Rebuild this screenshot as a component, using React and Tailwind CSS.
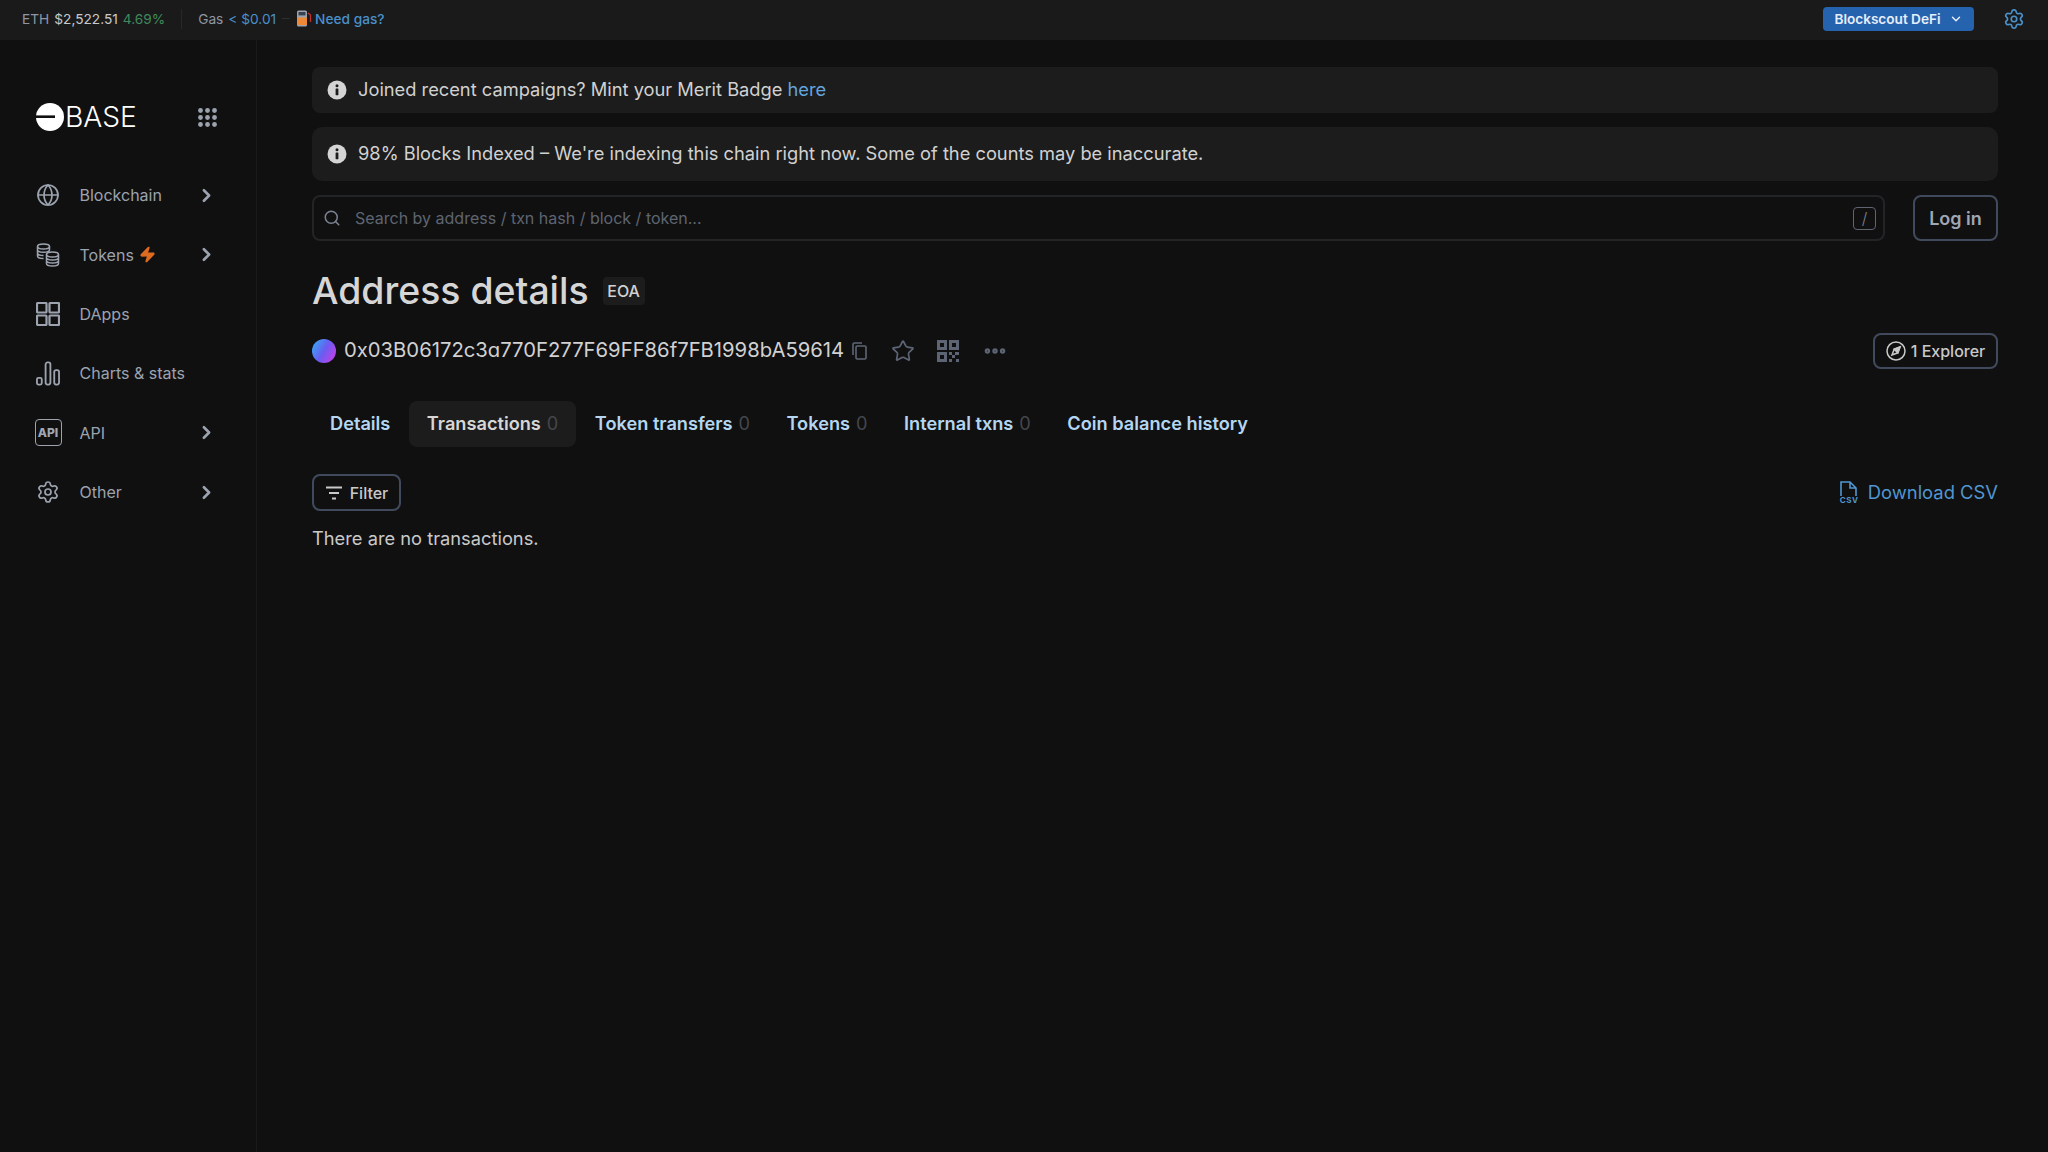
import React from 'react';
import { Globe, ChevronRight, ChevronDown, Settings, Search, Star, Ellipsis, Zap } from 'lucide-react';

const Coins = () => (
  <svg width="24" height="24" viewBox="0 0 24 24" fill="none" stroke="currentColor" strokeWidth="1.5">
    <ellipse cx="7.5" cy="3.5" rx="6" ry="2.5" />
    <path d="M1.5 3.5v9.5c0 1.4 2.7 2.5 6 2.5M1.5 6.8c0 1.4 2.7 2.5 6 2.5s6-1.1 6-2.5V3.5M1.5 10c0 1.4 2.7 2.5 6 2.5" />
    <ellipse cx="16.5" cy="11.5" rx="6" ry="2.5" />
    <path d="M10.5 11.5v9c0 1.4 2.7 2.5 6 2.5s6-1.1 6-2.5v-9M10.5 14.5c0 1.4 2.7 2.5 6 2.5s6-1.1 6-2.5M10.5 17.5c0 1.4 2.7 2.5 6 2.5s6-1.1 6-2.5" />
  </svg>
);
const Apps = () => (
  <svg width="24" height="24" viewBox="0 0 24 24" fill="none" stroke="currentColor" strokeWidth="2.2">
    <rect x="1" y="1" width="9.5" height="9.5" rx="0.8" /><rect x="13.5" y="1" width="9.5" height="9.5" rx="0.8" />
    <rect x="1" y="13.5" width="9.5" height="9.5" rx="0.8" /><rect x="13.5" y="13.5" width="9.5" height="9.5" rx="0.8" />
  </svg>
);
const Bars = () => (
  <svg width="25" height="25" viewBox="0 0 25 25" fill="none" stroke="currentColor" strokeWidth="1.9">
    <rect x="1" y="17" width="5" height="7" rx="1.6" /><rect x="10" y="1" width="5" height="23" rx="2" /><rect x="19" y="9" width="5" height="15" rx="2" />
  </svg>
);
const Info = () => (
  <svg width="20" height="20" viewBox="0 0 20 20" className="shrink-0">
    <circle cx="10" cy="10" r="9.5" fill="#d4d4d4" />
    <circle cx="10" cy="5.8" r="1.5" fill="#1c1c1c" />
    <rect x="8.6" y="8.6" width="2.8" height="6.6" rx="0.4" fill="#1c1c1c" />
  </svg>
);
const Pump = () => (
  <svg width="16" height="17" viewBox="0 0 16 17" className="shrink-0">
    <rect x="1" y="0.5" width="10" height="16" rx="1.5" fill="#9ca3af" />
    <rect x="2.5" y="2" width="7" height="3.4" fill="#374151" />
    <rect x="1" y="7.5" width="10" height="7.5" fill="#ed8936" />
    <path d="M12 3l2.5 2v7" stroke="#c53030" strokeWidth="1.3" fill="none" />
  </svg>
);
const Qr = () => (
  <svg width="22" height="22" viewBox="0 0 22 22" fill="#5d6575">
    <path fillRule="evenodd" d="M0 0h10v10H0zM3 3v4h4V3z" />
    <path fillRule="evenodd" d="M12 0h10v10H12zM15 3v4h4V3z" />
    <path fillRule="evenodd" d="M0 12h10v10H0zM3 15v4h4v-4z" />
    <path d="M12 12h3v3h-3zM18 12h4v3h-4zM15 15h3v3h-3zM12 19h3v3h-3zM19 19h3v3h-3z" />
  </svg>
);
const CopyIcon = () => (
  <svg width="15" height="18" viewBox="0 0 15 18" fill="none" stroke="#5d6575" strokeWidth="1.6">
    <rect x="4" y="4" width="10" height="13" rx="1.2" />
    <path d="M1 13V2.2C1 1.5 1.5 1 2.2 1H10" />
  </svg>
);
const CompassIcon = () => (
  <svg width="20" height="20" viewBox="0 0 20 20" fill="none" stroke="currentColor" strokeWidth="1.5" className="shrink-0">
    <circle cx="10" cy="10" r="9" />
    <path d="M14 6l-2.2 5.8L6 14l2.2-5.8z" />
    <path d="M14 6L8.2 8.2l3.6 3.6z" fill="currentColor" />
  </svg>
);

const nav = [
  { label: 'Blockchain', icon: <Globe size={24} strokeWidth={1.7} />, more: true },
  { label: 'Tokens', icon: <Coins />, more: true, bolt: true },
  { label: 'DApps', icon: <Apps /> },
  { label: 'Charts & stats', icon: <Bars /> },
  {
    label: 'API',
    icon: (
      <span className="flex h-[27px] w-[27px] shrink-0 items-center justify-center rounded-[4px] border-[1.5px] border-[#9ca3af] text-[12px] font-extrabold leading-none text-[#a0a7b4]">API</span>
    ),
    more: true,
  },
  { label: 'Other', icon: <Settings size={26} strokeWidth={1.7} />, more: true },
];

const tabs = [
  ['Details', null],
  ['Transactions', '0', true],
  ['Token transfers', '0'],
  ['Tokens', '0'],
  ['Internal txns', '0'],
  ['Coin balance history', null],
];

export default function App() {
  return (
    <div className="flex min-h-screen flex-col bg-[#101011] font-[Inter,sans-serif] text-[#d6d6d6]">
      <header className="flex h-10 items-center justify-between bg-[#1a1a1b] pb-[2px] pl-[22px] pr-[23px] text-[13.7px]">
        <div className="flex items-center">
          <span className="text-[#8f96a3]">ETH</span>
          <span className="ml-[5px] text-[#c9c9c9]">$2,522.51</span>
          <span className="ml-[5px] text-[#3f8a5c]">4.69%</span>
          <span className="ml-4 mr-4 h-5 w-px bg-[#26282a]" />
          <span className="text-[#8f96a3]">Gas</span>
          <span className="ml-[5px] text-[#4a90c9]">&lt; $0.01</span>
          <span className="mx-[6px] h-px w-2 bg-[#2c2e30]" />
          <Pump />
          <span className="ml-[3px] font-medium text-[#4a90c9]">Need gas?</span>
        </div>
        <div className="flex items-center gap-[29px]">
          <button className="flex h-[24px] w-[151px] items-center justify-center gap-2 rounded-[4px] bg-[#2563ae] text-[13.6px] font-semibold text-[#e6eefa]">
            Blockscout DeFi
            <ChevronDown size={14} strokeWidth={2.5} />
          </button>
          <Settings size={22} strokeWidth={1.8} className="text-[#4a90c9]" />
        </div>
      </header>

      <div className="flex flex-1">
        <aside className="w-[257px] shrink-0 border-r border-[#1a1a1b] pl-[36px] pr-[39px] pt-[63px]">
          <div className="flex h-[28px] items-center justify-between">
            <div className="flex items-center gap-[1px]">
              <svg width="28" height="28" viewBox="0 0 28 28">
                <circle cx="14" cy="14" r="14" fill="#fff" />
                <rect x="0" y="12.4" width="19" height="2.6" fill="#101011" />
              </svg>
              <span className="text-[28.2px] font-light leading-none text-white">BASE</span>
            </div>
            <svg width="19" height="19" viewBox="0 0 19 19" fill="#9ca3af">
              {[2.5, 9.5, 16.5].flatMap((y) => [2.5, 9.5, 16.5].map((x) => <circle key={`${x}-${y}`} cx={x} cy={y} r="2.4" />))}
            </svg>
          </div>
          <nav className="mt-[34.5px]">
            {nav.map((n) => (
              <div key={n.label} className="flex h-[59.4px] items-center text-[#9ca3af]">
                <span className="flex w-[24px] shrink-0 items-center justify-center">{n.icon}</span>
                <span className="ml-[19.5px] text-[16px]">{n.label}</span>
                {n.bolt && <Zap size={17} fill="#dd6b20" stroke="#dd6b20" className="ml-[5px]" />}
                {n.more && <ChevronRight size={21} strokeWidth={3} className="ml-auto" />}
              </div>
            ))}
          </nav>
        </aside>

        <main className="flex-1 pl-[55px] pr-[50px] pt-[27px]">
          <div className="flex h-[46px] items-center gap-[11px] rounded-[8px] bg-[#1c1c1c] px-[15px] text-[18.28px] text-[#d1d1d1]">
            <Info />
            <span>Joined recent campaigns? Mint your Merit Badge <span className="text-[#63a4de]">here</span></span>
          </div>
          <div className="mt-[14px] flex h-[54px] items-center gap-[11px] rounded-[10px] bg-[#1c1c1c] px-[15px] text-[18.28px] text-[#d1d1d1]">
            <Info />
            <span>98% Blocks Indexed – We're indexing this chain right now. Some of the counts may be inaccurate.</span>
          </div>

          <div className="mt-[14px] flex items-center justify-between">
            <div className="flex h-[46px] w-[1573px] items-center rounded-[8px] border-2 border-[#222426] pl-[9px] pr-[7px]">
              <Search size={18} className="text-[#7b8290]" />
              <span className="ml-[14px] flex-1 text-[16px] text-[#5e6570]">Search by address / txn hash / block / token...</span>
              <span className="flex h-[23px] w-[23px] items-center justify-center rounded-[4px] border-[1.5px] border-[#5e6570] text-[16px] font-light text-[#7b8290]">/</span>
            </div>
            <button className="h-[46px] w-[85px] rounded-[8px] border-[2.5px] border-[#414a5c] text-[18px] font-semibold text-[#a0a7b4]">Log in</button>
          </div>

          <div className="mt-[30px] flex h-[40px] items-center">
            <h1 className="text-[37.4px] font-medium leading-none text-[#d6d6d6]">Address details</h1>
            <span className="ml-[14px] flex h-[28px] w-[42px] items-center justify-center rounded-[4px] bg-[#1c1c1c] text-[16px] font-medium text-[#d1d1d1]">EOA</span>
          </div>

          <div className="mt-[21.5px] flex h-[36px] items-center">
            <span className="h-6 w-6 shrink-0 rounded-full bg-[linear-gradient(120deg,#2fb4f5,#6a5cf0_50%,#d63be8)]" />
            <span className="ml-[8px] text-[20.26px] text-[#d1d1d1] [font-feature-settings:'cv11']">0x03B06172c3a770F277F69FF86f7FB1998bA59614</span>
            <span className="ml-[8px]"><CopyIcon /></span>
            <Star size={24} strokeWidth={1.7} className="ml-[24px] text-[#5d6575]" />
            <span className="ml-[22px]"><Qr /></span>
            <Ellipsis size={26} strokeWidth={3} className="ml-[23px] text-[#5d6575]" />
            <button className="ml-auto flex h-[36px] w-[125px] items-center justify-center gap-[5px] rounded-[8px] border-[2.5px] border-[#414a5c] text-[16px] font-medium text-[#c9c9c9]">
              <CompassIcon />
              1 Explorer
            </button>
          </div>

          <div className="mt-[32.5px] flex h-[46px] items-center gap-[0.5px]">
            {tabs.map(([t, c, active]) => (
              <div key={t} className={`flex h-[46px] items-center rounded-[8px] px-[18px] text-[18.2px] font-semibold ${active ? 'bg-[#1c1c1c] text-[#d6d6d6]' : 'text-[#b4d6f0]'}`}>
                {t}
                {c && <span className="ml-[6px] font-normal text-[#44474b]">{c}</span>}
              </div>
            ))}
          </div>

          <div className="mt-[27px] flex items-center justify-between">
            <button className="flex h-[37px] w-[89px] items-center justify-center gap-[7px] rounded-[8px] border-[2.5px] border-[#414a5c] text-[16px] font-medium text-[#c9c9c9]">
              <svg width="18" height="14" viewBox="0 0 18 14" fill="none" stroke="currentColor" strokeWidth="2">
                <path d="M1 1.5h16M4 7h10M7 12.5h4" />
              </svg>
              Filter
            </button>
            <div className="flex items-center gap-[11px] text-[#5096d0]">
              <span className="relative h-[23px] w-[17px]">
                <svg width="17" height="16" viewBox="0 0 17 16" fill="none" stroke="currentColor" strokeWidth="1.6">
                  <path d="M1 15V1h9l6 6v8M10 1v6h6" />
                </svg>
                <span className="absolute bottom-0 left-0 text-[8px] font-bold leading-none tracking-[0.5px]">CSV</span>
              </span>
              <span className="text-[18.4px]">Download CSV</span>
            </div>
          </div>

          <p className="mt-[15px] text-[18.3px] leading-[24px] text-[#c9c9c9]">There are no transactions.</p>
        </main>
      </div>
    </div>
  );
}
